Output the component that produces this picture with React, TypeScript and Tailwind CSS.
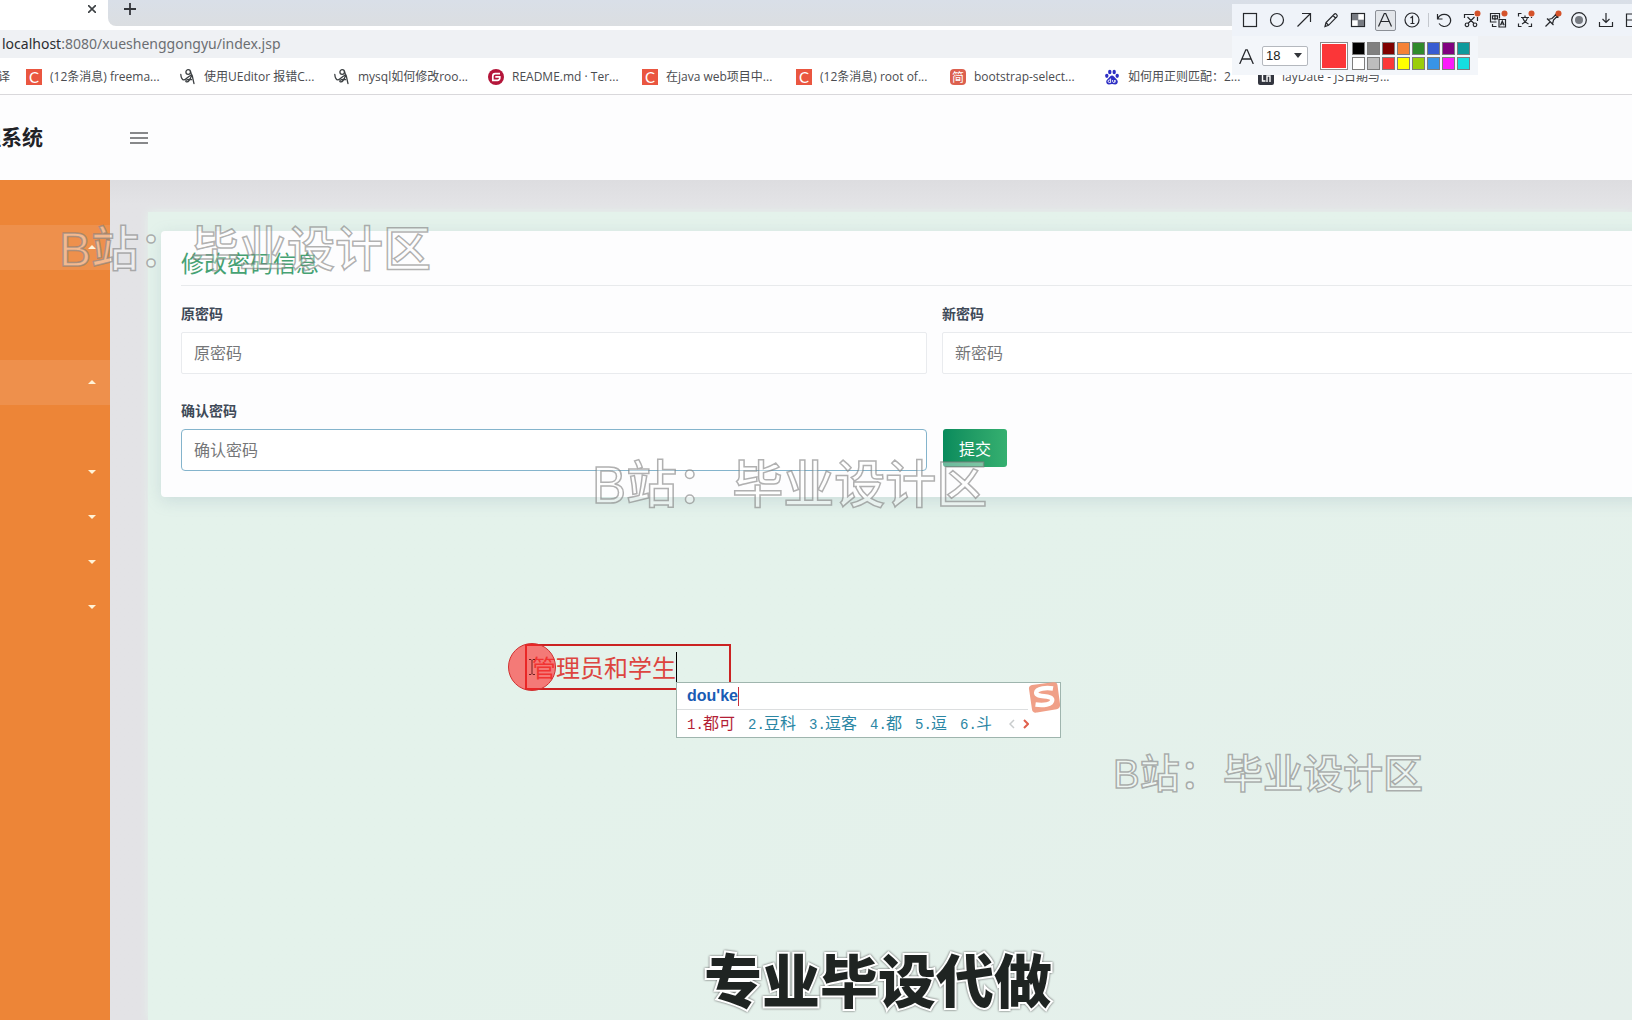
import React from "react";

const CJK = "font-['Noto_Sans_CJK_SC',sans-serif]";

/* ---------- browser chrome ---------- */

function BadgeC() {
  return (
    <span className="flex size-4 shrink-0 items-center justify-center bg-[#ea5640] font-['Lato','Noto_Sans_CJK_SC',sans-serif] text-[15px] leading-4 text-white">
      C
    </span>
  );
}

function BadgeG() {
  return (
    <svg viewBox="0 0 16 16" className="size-4 shrink-0" aria-hidden="true">
      <circle cx="8" cy="8" r="8" fill="#b4163a" />
      <path d="M12 4.7H7.2A2.4 2.4 0 0 0 4.8 7.1v4.2h4.7A2.3 2.3 0 0 0 11.8 9V7.9H7.3" fill="none" stroke="#fff" strokeWidth="1.7" />
    </svg>
  );
}

function BadgeJian() {
  return (
    <span className="flex size-4 shrink-0 items-center justify-center rounded-sm bg-[#dc604e] font-['Noto_Sans_CJK_SC',sans-serif] text-[12px] leading-4 text-white">
      简
    </span>
  );
}

function BadgeSwirl() {
  return (
    <svg viewBox="0 0 16 16" className="size-4 shrink-0" fill="none" stroke="#3c4043" strokeWidth="1.3" strokeLinecap="round" aria-hidden="true">
      <path d="M.8 5.500c.2 3 1.500 5.600 3.200 5.400C5.800 10.700 7.500 8 10.500 6.500" />
      <circle cx="8.200" cy="3" r="2.300" />
      <path d="M10.500 2.500c1.200 2.500.6 6.500-1.400 9-1.300 1.700-3.300 1.800-3.300.5 0-1.400 3-2 5.700-1.400M12 6c.8 2.500 1.200 5.500 2 8.500" />
    </svg>
  );
}

function BadgePaw() {
  return (
    <svg viewBox="0 0 16 16" className="size-4 shrink-0" fill="#2e2fc4" aria-hidden="true">
      <ellipse cx="2.800" cy="6.800" rx="1.700" ry="2.100" />
      <ellipse cx="5.800" cy="3" rx="1.700" ry="2.200" />
      <ellipse cx="10.200" cy="3" rx="1.700" ry="2.200" />
      <ellipse cx="13.200" cy="6.800" rx="1.700" ry="2.100" />
      <path d="M8 6.600c-1.600 0-2.300 1.500-3.500 2.600S2.200 11.300 2.200 12.800c0 1.700 1.300 2.700 2.800 2.600 1 0 2-.3 3-.3s2 .3 3 .3c1.500.1 2.800-.9 2.800-2.600 0-1.500-1.100-2.500-2.300-3.600S9.600 6.600 8 6.600z" />
      <path d="M6.600 9.500v4H5.200c-1.500 0-1.500-2.500 0-2.500h1.400M8.600 11v1.700c0 1 2.300 1 2.300 0V11v2.500" fill="none" stroke="#fff" strokeWidth=".9" />
    </svg>
  );
}

function BadgeLay() {
  return (
    <svg viewBox="0 0 16 16" className="size-4 shrink-0" aria-hidden="true">
      <rect width="16" height="16" rx="2" fill="#33363f" />
      <path d="M4.500 6v6h3M9 13V7h3v6" fill="none" stroke="#fff" strokeWidth="1.400" />
    </svg>
  );
}

const bookmarks = [
  { icon: <BadgeC />, label: "(12条消息) freema..." },
  { icon: <BadgeSwirl />, label: "使用UEditor 报错C..." },
  { icon: <BadgeSwirl />, label: "mysql如何修改roo..." },
  { icon: <BadgeG />, label: "README.md · Ter..." },
  { icon: <BadgeC />, label: "在java web项目中..." },
  { icon: <BadgeC />, label: "(12条消息) root of..." },
  { icon: <BadgeJian />, label: "bootstrap-select..." },
  { icon: <BadgePaw />, label: "如何用正则匹配：2..." },
  { icon: <BadgeLay />, label: "layDate - JS日期与..." },
];

function BrowserChrome() {
  return (
    <div className="shrink-0 bg-white">
      <div className="flex h-[26px] bg-white">
        <div className="flex w-[108px] shrink-0 items-start justify-end pr-3">
          <button aria-label="关闭标签页" className="mt-[5px] size-2">
            <svg viewBox="0 0 8 8" className="size-2" stroke="#3c4043" strokeWidth="1.600">
              <path d="M0 0l8 8M8 0L0 8" />
            </svg>
          </button>
        </div>
        <div className="flex-1 rounded-bl-lg bg-linear-to-b from-[#d9dfe8] to-[#dbdee1] pl-4">
          <button aria-label="新标签页" className="mt-[3px] block size-3">
            <svg viewBox="0 0 12 12" className="size-3" stroke="#33363b" strokeWidth="1.800">
              <path d="M6 0v12M0 6h12" />
            </svg>
          </button>
        </div>
      </div>
      <div className="mt-1 flex h-7 items-center bg-[#eff1f4] pb-0.5 pl-0.5 font-['Noto_Sans','Noto_Sans_CJK_SC',sans-serif] text-[14px] text-[#6b6e72]">
        <span className="text-[#2b2d30]">localhost</span>:8080/xueshenggongyu/index.jsp
      </div>
      <nav className="flex h-[37px] items-center overflow-hidden border-b border-[#d9d8db] pt-0.5 font-['Open_Sans','Noto_Sans_CJK_SC',sans-serif] text-[12px] text-[#4a4c50]">
        <a href="#t" className="flex w-[26px] shrink-0 justify-end pr-4 whitespace-nowrap">译</a>
        {bookmarks.map((b) => (
          <a key={b.label} href="#b" className="flex w-[154px] shrink-0 items-center gap-2 whitespace-nowrap">
            {b.icon}
            {b.label}
          </a>
        ))}
      </nav>
    </div>
  );
}

/* ---------- sidebar ---------- */

const rows: { open?: boolean; caret?: "up" | "down" }[] = [
  { open: true, caret: "up" },
  {},
  {},
  { open: true, caret: "up" },
  {},
  { caret: "down" },
  { caret: "down" },
  { caret: "down" },
  { caret: "down" },
];

function Sidebar() {
  return (
    <aside className="w-[110px] shrink-0 bg-[#ed8537] pt-[45px]">
      {rows.map((r, i) => (
        <div
          key={i}
          className={
            r.open
              ? "flex h-[45px] items-center justify-end bg-[#ee904c] pr-[14px] pb-0.5"
              : "flex h-[45px] items-center justify-end pr-[14px] pb-0.5"
          }
        >
          {r.caret && (
            <button aria-label={r.caret === "up" ? "收起" : "展开"}>
              <svg viewBox="0 0 8 4" className="h-1 w-2" fill="#fff3d8">
                <path d={r.caret === "up" ? "M0 4L4 0l4 4z" : "M0 0l4 4 4-4z"} />
              </svg>
            </button>
          )}
        </div>
      ))}
    </aside>
  );
}

/* ---------- form ---------- */

function Field({ id, label, active }: { id: string; label: string; active?: boolean }) {
  return (
    <div>
      <label htmlFor={id} className="block h-[31px] text-[14px] leading-[25px] font-bold text-[#3f4a58]">
        {label}
      </label>
      <input
        id={id}
        type="password"
        placeholder={label}
        className={
          active
            ? "h-[42px] w-full rounded-sm border border-[#84b4cc] bg-white px-3 pb-0.5 text-[16px] outline-none placeholder:text-[#757678]"
            : "h-[42px] w-full rounded-xs border border-[#e9ebee] bg-white px-3 pb-0.5 text-[16px] outline-none placeholder:text-[#757678]"
        }
      />
    </div>
  );
}

function PasswordCard() {
  return (
    <section className="-mr-[76px] rounded-sm bg-[#fdfdfe] px-5 pt-[15px] pb-[26px] shadow-[0_4px_16px_rgba(120,150,170,0.22)]">
      <h2 className="border-b border-[#e8eaec] pb-[7px] text-[23px] leading-8 text-[#46a273]">修改密码信息</h2>
      <form className="grid grid-cols-2 gap-x-[15px] gap-y-6 pt-[15px]" onSubmit={(e) => e.preventDefault()}>
        <Field id="old" label="原密码" />
        <Field id="new" label="新密码" />
        <Field id="confirm" label="确认密码" active />
        <div className="pt-[31px]">
          <button
            type="submit"
            className="ml-px h-[38px] w-16 rounded-[3px] bg-linear-to-r from-[#078b5c] to-[#35b070] text-[16px] text-white"
          >
            提交
          </button>
        </div>
      </form>
    </section>
  );
}

/* ---------- capture toolbar ---------- */

const dot = <circle cx="14.500" cy="2.500" r="3" fill="#d4522a" stroke="none" />;

const tools: { name: string; on?: boolean; art: React.ReactNode }[] = [
  { name: "矩形", art: <rect x="1.500" y="2.500" width="13" height="13" /> },
  { name: "椭圆", art: <circle cx="8" cy="9" r="6.500" /> },
  { name: "箭头", art: <path d="M1.500 15.500L14 3M6 2.500h8.500V11" /> },
  { name: "画笔", art: <path d="M2 15.500l1-4L11.500 3c1-1 3.500 1 2.500 2.600L5.500 14.300zM10 4.500l3 3M3 11.500l2.500 2.800" /> },
  {
    name: "马赛克",
    art: (
      <>
        <rect x="1.500" y="2.500" width="13" height="13" fill="#fff" />
        <path d="M2 3h6v6H2zM8 9h6v6H8z" fill="#777b82" stroke="none" />
        <path d="M8 3v12M2 9h12" stroke="#777b82" strokeWidth=".6" />
      </>
    ),
  },
  { name: "文字", on: true, art: <path d="M1.500 15.500L7.300 2.500h1.400l5.800 13M4 10.500h8" /> },
  { name: "序号", art: (<><circle cx="8" cy="9" r="7" /><path d="M6.500 7L8.500 5.500v7M6.500 12.500h4" /></>) },
  { name: "撤销", art: <path d="M1.500 3v5h5M2 7.500C4 2 12.500 1.800 14.500 8c1 4.500-3 8-7 7.400C5.500 15 4 14 3 12.500" /> },
  { name: "裁剪", art: (<><path d="M1.500 7V3.500H11M14.500 6v4M4.500 6l6.500 6.500M11.500 6L5 12.500" /><circle cx="4" cy="13.800" r="1.800" /><circle cx="12" cy="13.800" r="1.800" />{dot}</>) },
  { name: "翻译", art: (<><path d="M9.500 7.500V2.500H.5v8.500h6M2.500 4.800h5v3h-5zM5 3.800v5.500M9 8.500h6.500v7.500H9zM10.500 14.300l1.800-4.300 1.800 4.300M11.200 13h2.200M2.500 13v2.500h4" />{dot}</>) },
  { name: "识别文字", art: (<><path d="M4.500 2.500H1.500v3M1.500 12.500v3h3M11.500 15.500h3v-3M14.500 6v1M4 6.500h8M8 4.500v2M5 13c3-1.500 5-3.500 5.500-6.500M5.500 6.500c1 3 3 5 6 6.500" />{dot}</>) },
  { name: "固定", art: (<><path d="M1.500 15.500l4.500-4.500M3 7.500l6.500 6.500M4 8.500l4-1 4-4M8.500 13l1-4 4-4M11 3l3.500 3.500" />{dot}</>) },
  { name: "录制", art: (<><circle cx="8" cy="9" r="7.300" /><circle cx="8" cy="9" r="4" fill="#777b82" stroke="none" /></>) },
  { name: "保存", art: <path d="M8 2v9.500M4.500 8L8 11.500 11.500 8M1.500 11v4.500h13V11" /> },
  { name: "复制", art: <path d="M1.500 3h13v12.500h-13zM2 9h12" /> },
];

const palette = [
  "bg-black", "bg-[#808080]", "bg-[#800000]", "bg-[#f58237]", "bg-[#2f8a2b]", "bg-[#385cd2]", "bg-[#800080]", "bg-[#0e9a9c]",
  "bg-white", "bg-[#bdbdbd]", "bg-[#fb3838]", "bg-[#ffff00]", "bg-[#9acd0a]", "bg-[#3894e6]", "bg-[#fb1afb]", "bg-[#14dee0]",
];

function CaptureToolbar() {
  return (
    <div className="absolute top-1 right-0 w-[400px] overflow-hidden">
      <div className="flex h-8 items-center bg-[#eff3f9] pl-[5px]">
        {tools.map((t, i) => (
          <React.Fragment key={t.name}>
            {i === 7 && <span className="mx-[2px] h-3.5 w-px shrink-0 bg-[#c4c8ce]" />}
            <button
              aria-label={t.name}
              className={
                t.on
                  ? "mx-[3px] flex size-[21px] shrink-0 items-center justify-center rounded-xs border border-[#8b8f96] bg-[#e3e6ea]"
                  : "flex h-[22px] w-[27px] shrink-0 items-center justify-center"
              }
            >
              <svg viewBox="0 0 17 18" className="h-[18px] w-[17px] shrink-0 overflow-visible" fill="none" stroke="#26282c" strokeWidth="1.200">
                {t.art}
              </svg>
            </button>
          </React.Fragment>
        ))}
      </div>
      <div className="flex h-[39px] w-[246px] items-center bg-[#f3f6fa] pt-px pl-[7px]">
        <svg viewBox="0 0 15 15" className="size-[15px]" fill="none" stroke="#26282c" strokeWidth="1.300" aria-hidden="true">
          <path d="M.7 15L6.800.8h1.400L14.300 15M3 10h9" />
        </svg>
        <label className="relative ml-2 block h-5 w-[46px]">
          <select
            aria-label="字号"
            defaultValue="18"
            className="block h-5 w-full appearance-none rounded-xs border border-[#b4b8be] bg-white pl-[3px] font-['Liberation_Sans',sans-serif] text-[13px] leading-4 text-[#1c1d20]"
          >
            <option>18</option>
          </select>
          <svg viewBox="0 0 8 5" className="pointer-events-none absolute top-[7px] right-1.5 h-[5px] w-2" fill="#33363b">
            <path d="M0 0h8L4 5z" />
          </svg>
        </label>
        <button aria-label="当前颜色" className="ml-3 size-7 border border-[#8c8c8c] bg-[#fb3638] inset-ring inset-ring-white" />
        <div className="ml-1 grid grid-cols-8 gap-[2px]">
          {palette.map((c) => (
            <button key={c} aria-label="颜色" className={"size-[13px] border border-[#7d7d7d] " + c} />
          ))}
        </div>
      </div>
    </div>
  );
}

/* ---------- overlays ---------- */

function Watermark({ className }: { className: string }) {
  return (
    <p
      className={
        "pointer-events-none absolute whitespace-pre font-['Liberation_Sans','Noto_Sans_CJK_SC',sans-serif] leading-none font-medium text-white/40 [-webkit-text-stroke:1.500px_rgba(125,125,125,0.600)] " +
        className
      }
    >
      {"B站：\u200A毕业设计区"}
    </p>
  );
}

const candidates = ["都可", "豆科", "逗客", "都", "逗", "斗"];

function ImePopup() {
  return (
    <div className="absolute top-[682px] left-[676px] h-[56px] w-[385px] border border-[#9fb5ae] bg-white">
      <div className="mr-8 flex h-[27px] items-center border-b border-[#dcdedf] pl-[10px]">
        <span className="font-['Liberation_Sans',sans-serif] text-[16px] font-bold text-[#1a5cb4]">dou'ke</span>
        <span className="h-[19px] w-px bg-[#c8303c]" />
      </div>
      <ol className="flex h-[27px] items-center gap-[13px] pl-[10px] text-[#2a86a4]">
        {candidates.map((c, i) => (
          <li key={c} className={i === 0 ? "flex items-baseline leading-5 text-[#b31f36]" : "flex items-baseline leading-5"}>
            <span className="w-4 font-['Liberation_Mono',monospace] text-[14px]">{i + 1}.</span>
            <span className="text-[16px]">{c}</span>
          </li>
        ))}
        <li className="flex items-center gap-2 pl-1">
          <svg viewBox="0 0 6 10" className="h-2.5 w-1.5" fill="none" stroke="#c9cccd" strokeWidth="1.500"><path d="M5 1L1 5l4 4" /></svg>
          <svg viewBox="0 0 6 10" className="h-2.5 w-1.5" fill="none" stroke="#e0604c" strokeWidth="2"><path d="M1 1l4 4-4 4" /></svg>
        </li>
      </ol>
      <svg viewBox="0 0 32 32" className="absolute -top-px right-0 size-8" aria-hidden="true">
        <path d="M1 7c-.3-2 .8-3.500 3-4L25 .3c3-.4 4.200.6 4.500 3L32 22c.3 3-.7 4.500-3.500 5.300L9 30.500c-3 .5-4.500-.4-5-3z" fill="#f0a088" />
        <path d="M25 6.500c-6-1-16.500-.5-16.800 4.200-.3 5.300 16 2 16 7.300 0 4.800-9 5.500-16.700 4.500" fill="none" stroke="#fff" strokeWidth="4.500" />
      </svg>
    </div>
  );
}

function Annotation() {
  return (
    <>
      <div className="absolute top-[644px] left-[525px] flex h-[46px] w-[206px] items-center border-2 border-[#cb2222] pl-[5px]">
        <span className="text-[24px] leading-8 text-[#dd4540]">管理员和学生</span>
        <span className="h-[31px] w-px bg-black" />
      </div>
      <div className="absolute top-[643px] left-[508px] flex size-12 items-center justify-center rounded-full border border-[#d03030] bg-[#ff2a2a]/60">
        <svg viewBox="0 0 6 16" className="h-4 w-1.5" fill="none" stroke="#6e2020" aria-hidden="true">
          <path d="M0 .5h2l1 1 1-1h2M3 1.500v13M0 15.500h2l1-1 1 1h2" />
        </svg>
      </div>
    </>
  );
}

export default function App() {
  return (
    <div className={"relative flex h-screen flex-col overflow-hidden bg-[#fdfdfe] " + CJK}>
      <BrowserChrome />
      <header className="flex h-[85px] shrink-0 items-center">
        <div className="flex w-[43px] justify-end overflow-hidden pb-0.5 text-[21px] font-bold whitespace-nowrap text-[#212226]">理系统</div>
        <button aria-label="菜单" className="ml-[87px] flex w-[18px] flex-col gap-[3px]">
          <span className="h-0.5 w-full bg-[#87888a]" />
          <span className="h-0.5 w-full bg-[#87888a]" />
          <span className="h-0.5 w-full bg-[#87888a]" />
        </button>
      </header>
      <div className="flex min-h-0 flex-1">
        <Sidebar />
        <main className="flex min-w-0 flex-1 overflow-hidden bg-linear-to-b from-[#dddde0] to-[#e3e3e6] to-[24px] pt-8 pl-[38px]">
          <div className="min-w-0 flex-1 bg-linear-to-br from-[#e4f2eb] from-50% to-[#e5efeb] pt-[19px] pl-[13px] shadow-[0_0_8px_#e4f2eb]">
            <PasswordCard />
          </div>
        </main>
      </div>

      <Annotation />
      <ImePopup />
      <CaptureToolbar />
      <Watermark className="top-[226px] left-[59px] text-[48px]" />
      <Watermark className="top-[460px] left-[592px] text-[51px]" />
      <Watermark className="top-[754px] left-[1113px] text-[40px]" />
      <p className="pointer-events-none absolute top-[940px] left-[704px] text-[58px] leading-[76px] font-black whitespace-nowrap text-[#1f2422] [-webkit-text-stroke:4px_white] [paint-order:stroke_fill] drop-shadow-[0_0_1px_#555]">
        专业毕设代做
      </p>
    </div>
  );
}
